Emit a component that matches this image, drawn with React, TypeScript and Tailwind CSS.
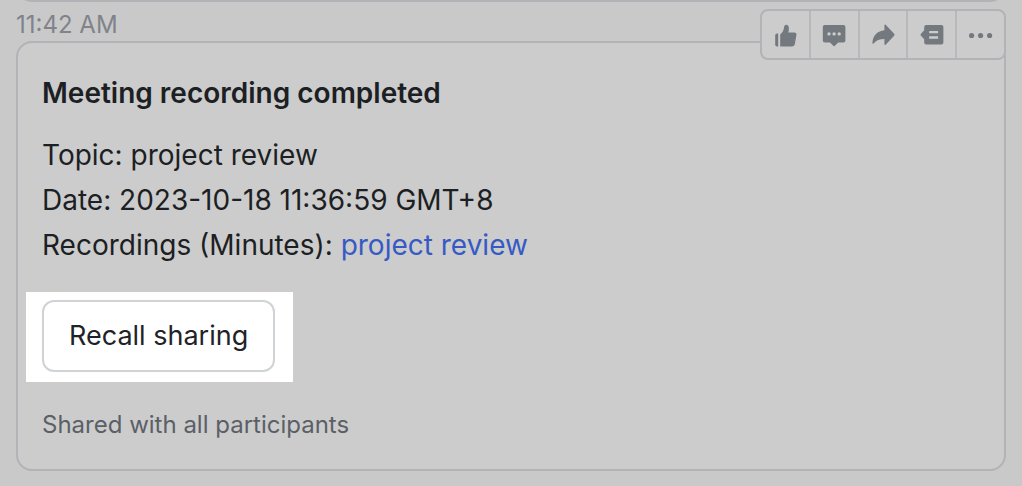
import type { ReactNode } from 'react';

type Action = {
  label: string;
  icon: ReactNode;
};

const actions: Action[] = [
  {
    label: 'Like',
    icon: (
      <>
        <path d="M2.2 12.4a1.8 1.8 0 0 1 1.8-1.8h1.2v13H4a1.8 1.8 0 0 1-1.8-1.8z" />
        <path d="M7.2 11.4c2.2-1.5 3.4-3.6 3.8-6.8.2-1.8 1-2.9 2.3-2.9 1.7 0 2.6 1.5 2.6 3.7 0 1.6-.2 2.9-.6 4.2h5.9a2.2 2.2 0 0 1 2.2 2.6l-1.5 8.6a3.3 3.3 0 0 1-3.2 2.8H7.2z" />
      </>
    ),
  },
  {
    label: 'Reply in thread',
    icon: (
      <path
        fillRule="evenodd"
        d="M2.8 2h18.6a2 2 0 0 1 2 2v13.6a2 2 0 0 1-2 2h-5.2l-3.5 3.3a.9.9 0 0 1-1.2 0L8 19.6H2.8a2 2 0 0 1-2-2V4a2 2 0 0 1 2-2zM7 9.2a1.7 1.7 0 1 0 0 3.4 1.7 1.7 0 0 0 0-3.4zm5.1 0a1.7 1.7 0 1 0 0 3.4 1.7 1.7 0 0 0 0-3.4zm5.1 0a1.7 1.7 0 1 0 0 3.4 1.7 1.7 0 0 0 0-3.4z"
      />
    ),
  },
  {
    label: 'Forward',
    icon: (
      <path d="M13.4 2.6v4.7C6.6 8 1.8 12.3 1.4 20c0 .8.7 1.1 1.2.5 2.6-3.2 5.8-4.6 10.8-4.6v5c0 .9.9 1.3 1.5.7l8-8.6a1.7 1.7 0 0 0 0-2.4l-8-8.7c-.6-.6-1.5-.2-1.5.7z" />
    ),
  },
  {
    label: 'Pin',
    icon: (
      <path
        fillRule="evenodd"
        d="M6.2 2h15.2a2 2 0 0 1 2 2v15.4a2 2 0 0 1-2 2H6.2a2 2 0 0 1-2-2v-3.2L1.2 13a1.8 1.8 0 0 1 0-2.6l3-3.2V4a2 2 0 0 1 2-2zM9.2 7.9v2.4h8.9V7.9zm0 5.4v2.4h8.9v-2.4z"
      />
    ),
  },
  {
    label: 'More',
    icon: (
      <>
        <circle cx="2.6" cy="12.5" r="2.6" />
        <circle cx="11.6" cy="12.5" r="2.6" />
        <circle cx="20.6" cy="12.5" r="2.6" />
      </>
    ),
  },
];

const Toolbar = () => (
  <div className="absolute -top-8 right-0 flex h-[51px] w-[246px] divide-x-2 divide-[#b7b8bb] overflow-hidden rounded-lg border-2 border-[#b2b3b6] bg-[#cccccc]">
    {actions.map(({ label, icon }) => (
      <button
        key={label}
        type="button"
        aria-label={label}
        className="flex flex-1 items-center justify-center text-[#747980]"
      >
        <svg viewBox="0 0 24 24" className="size-6 shrink-0" fill="currentColor" aria-hidden="true">
          {icon}
        </svg>
      </button>
    ))}
  </div>
);

const App = () => {
  return (
    <div className="min-h-screen bg-[#c9c9c9] px-4 font-['Inter',sans-serif] text-[#1c1f23]">
      {/* Bottom edge of the previous message */}
      <div className="flex h-[2px] items-end overflow-hidden">
        <div className="h-8 w-full shrink-0 rounded-2xl border-2 border-[#b2b2b7] bg-[#cccccc]" />
      </div>

      <time className="mt-[7px] block text-2xl leading-8 text-[#80838a]">11:42 AM</time>

      <article className="relative">
        <div className="rounded-2xl border-2 border-[#b2b2b7] bg-[#cccccc] px-6 pt-8 pb-[26px]">
          <h2 className="text-[28px] leading-9 font-semibold">Meeting recording completed</h2>

          <div className="mt-[22px] text-[28px] leading-[45px]">
            <p>Topic: project review</p>
            <p>Date: 2023-10-18 11:36:59 GMT+8</p>
            <p>
              Recordings (Minutes):{' '}
              <a href="#minutes" className="text-[#365ac4]">
                project review
              </a>
            </p>
          </div>

          <div className="mt-6 -ml-4 w-fit bg-white pt-2 pr-[18px] pb-[10px] pl-4">
            <button
              type="button"
              className="h-[72px] rounded-xl border-2 border-[#d0d3d6] px-[25px] text-[27px] text-[#1f2329]"
            >
              Recall sharing
            </button>
          </div>

          <p className="mt-[25px] text-2xl leading-9 text-[#5b5f66]">Shared with all participants</p>
        </div>

        <Toolbar />
      </article>
    </div>
  );
};

export default App;
